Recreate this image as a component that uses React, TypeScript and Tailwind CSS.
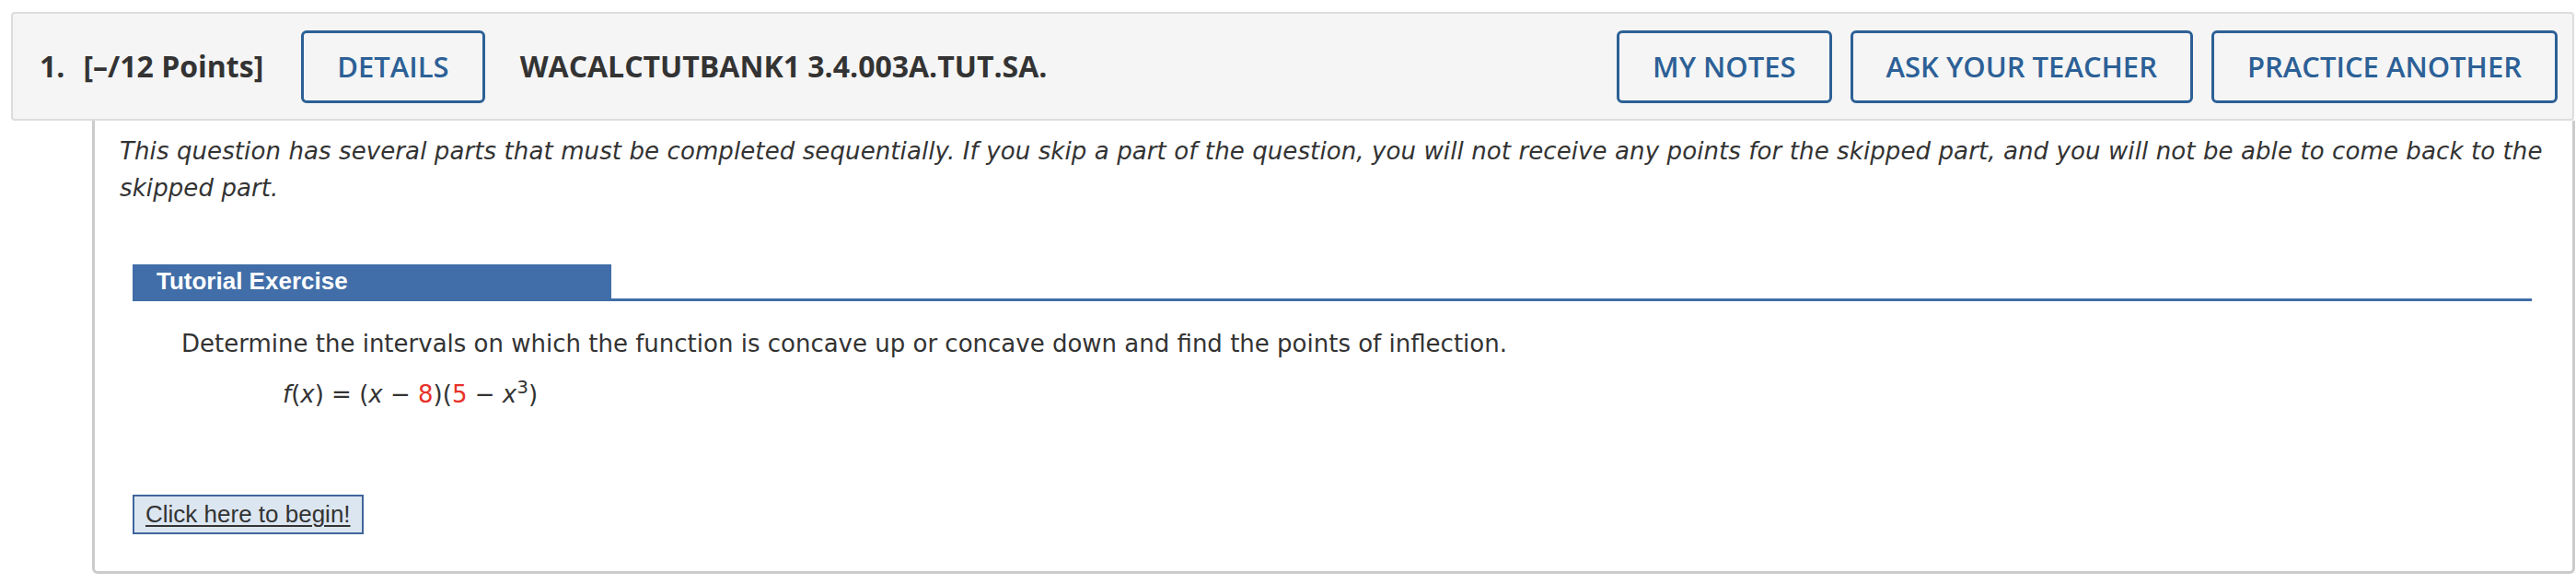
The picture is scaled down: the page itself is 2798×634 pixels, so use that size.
const headerFont = { fontFamily: '"Open Sans", "Liberation Sans", sans-serif' };

function OutlineButton({ label }: { label: string }) {
    return (
        <button className="h-[79px] rounded-[6px] border-[3px] border-[#2c6096] bg-transparent px-[36px] text-[31px] font-semibold uppercase text-[#2c6096]">
            {label}
        </button>
    );
}

function QuestionHeader() {
    return (
        <div
            className="flex h-[118px] items-center rounded-[4px] border-2 border-[#dddddd] bg-[#f5f5f5] pl-[29px] pr-[16px] text-[#333333]"
            style={headerFont}
        >
            <span className="text-[32px] font-bold">1.</span>
            <span className="ml-[20px] text-[32px] font-bold">[–/12 Points]</span>
            <div className="ml-[41px]">
                <OutlineButton label="Details" />
            </div>
            <span className="ml-[38px] text-[32px] font-bold">WACALCTUTBANK1 3.4.003A.TUT.SA.</span>
            <div className="ml-auto flex items-center gap-[20px]">
                <OutlineButton label="My Notes" />
                <OutlineButton label="Ask Your Teacher" />
                <OutlineButton label="Practice Another" />
            </div>
        </div>
    );
}

export default function App() {
    return (
        <div className="h-[634px] w-[2798px] bg-white">
            <div className="pl-[12px] pr-[2px] pt-[13px]">
                <QuestionHeader />
            </div>

            <div
                className="ml-[100px] mr-[1px] h-[492px] rounded-b-[6px] border-x-[3px] border-b-[3px] border-[#cccccc] pl-[27px] pr-[30px] pt-[13px] text-[26px] text-[#333333]"
                style={{ fontFamily: '"DejaVu Sans", Verdana, sans-serif' }}
            >
                <p className="italic leading-[40px] tracking-[0.1px]">
                    This question has several parts that must be completed sequentially. If you skip a part of the question, you will not receive any points for the skipped part, and you will not be able to come back to the skipped part.
                </p>

                <div className="ml-[14px] mr-[14px] mt-[63px]">
                    <div className="border-b-[3px] border-[#416ea8]">
                        <div
                            className="flex h-[37px] w-[520px] items-center bg-[#416ea8] pl-[26px] text-[26px] font-bold text-white"
                            style={{ fontFamily: '"Liberation Sans", Arial, sans-serif' }}
                        >
                            Tutorial Exercise
                        </div>
                    </div>

                    <p className="ml-[53px] mt-[26px] leading-[40px]">
                        Determine the intervals on which the function is concave up or concave down and find the points of inflection.
                    </p>
                    <p className="ml-[163px] mt-[15px] leading-[40px]">
                        <i>f</i>(<i>x</i>) = (<i>x</i> − <span className="text-[#e8312a]">8</span>)(<span className="text-[#e8312a]">5</span> − <i>x</i>
                        <sup className="text-[20px]">3</sup>)
                    </p>

                    <button
                        className="mt-[89px] flex h-[43px] items-center border-2 border-[#40659c] bg-[#dce6f0] px-[12px] text-[26px] text-[#333333] underline decoration-[2px] underline-offset-[3px]"
                        style={{ fontFamily: '"Liberation Sans", Arial, sans-serif' }}
                    >
                        Click here to begin!
                    </button>
                </div>
            </div>
        </div>
    );
}
